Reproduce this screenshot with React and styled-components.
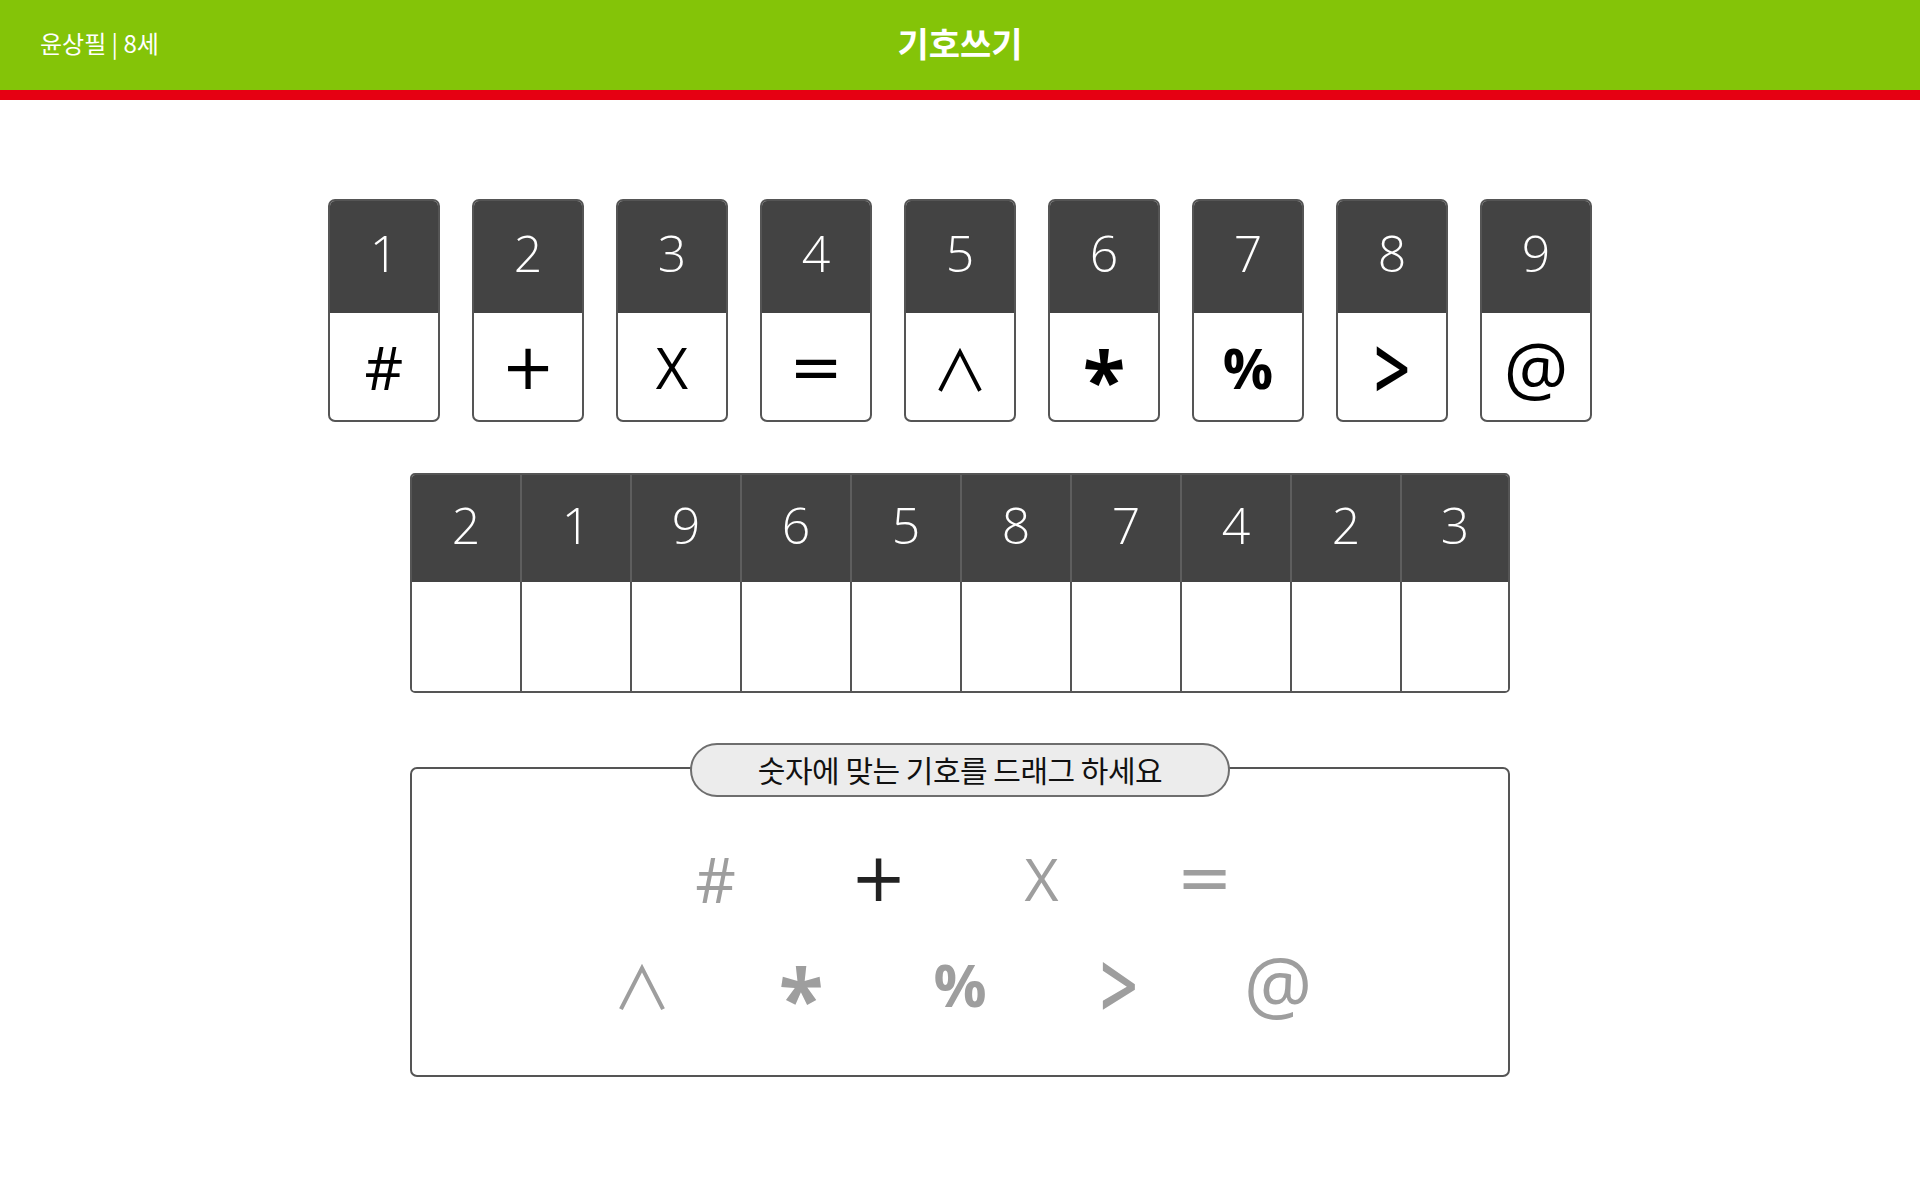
import React from "react";
import styled, { createGlobalStyle } from "styled-components";

const GlobalStyle = createGlobalStyle`
  html, body {
    margin: 0;
    padding: 0;
    background: #ffffff;
  }
  body {
    font-family: "Noto Sans CJK KR", "Open Sans", sans-serif;
  }
`;

const OPEN = '"Open Sans", sans-serif';
const DEJAVU = '"DejaVu Sans", sans-serif';
const CJK = '"Noto Sans CJK KR", sans-serif';

// each symbol's glyph settings, so they read the same size in the cards
const KEY = [
  { num: 1, sym: "#", font: OPEN, size: 60 },
  { num: 2, sym: "+", font: DEJAVU, size: 64 },
  { num: 3, sym: "X", font: OPEN, size: 56 },
  { num: 4, sym: "=", font: DEJAVU, size: 64 },
  { num: 5, sym: "∧", font: CJK, size: 56 },
  { num: 6, sym: "*", font: OPEN, size: 78, weight: 700, drop: 12 },
  { num: 7, sym: "%", font: OPEN, size: 56, weight: 700 },
  { num: 8, sym: ">", font: OPEN, size: 64, weight: 600, sy: 1.4 },
  { num: 9, sym: "@", font: OPEN, size: 72 },
];

const QUESTION = [2, 1, 9, 6, 5, 8, 7, 4, 2, 3];

const ROW_ONE = KEY.slice(0, 4);
const ROW_TWO = KEY.slice(4);

// header
const Header = styled.header`
  box-sizing: border-box;
  height: 100px;
  padding: 0 40px 6px;
  background: #84c408;
  border-bottom: 10px solid #e60012;
  display: grid;
  grid-template-columns: 1fr auto 1fr;
  align-items: center;
`;

const Student = styled.div`
  color: #ffffff;
  font-size: 24px;
  white-space: pre;
`;

const Title = styled.h1`
  margin: 0;
  color: #ffffff;
  font-size: 34px;
  font-weight: 700;
`;

// number -> symbol key
const KeyRow = styled.div`
  display: flex;
  justify-content: center;
  gap: 32px;
  margin-top: 99px;
`;

const Card = styled.div`
  width: 112px;
  height: 223px;
  box-sizing: border-box;
  border: 2px solid #555555;
  border-radius: 7px;
  background: #ffffff;
  display: flex;
  flex-direction: column;
`;

const Digit = styled.div`
  background: #434343;
  color: #ffffff;
  display: flex;
  align-items: center;
  justify-content: center;
  box-sizing: border-box;
  padding-bottom: 8px;
  font-family: "Open Sans", sans-serif;
  font-weight: 300;
  font-size: 50px;
`;

const CardNum = styled(Digit)`
  flex: 0 0 112px;
  border-radius: 5px 5px 0 0;
`;

const Glyph = styled.span`
  display: inline-block;
  font-family: ${(p) => p.$font};
  font-weight: ${(p) => p.$weight || 400};
  font-size: ${(p) => p.$size}px;
  line-height: 1;
  padding-top: ${(p) => p.$drop * 2}px;
  color: ${(p) => p.$color};
  transform: scaleY(${(p) => p.$sy || 1});
`;

const CardSym = styled.div`
  flex: 1;
  min-height: 0;
  display: flex;
  align-items: center;
  justify-content: center;
`;

// question table
const Table = styled.div`
  width: 1100px;
  box-sizing: border-box;
  margin: 51px auto 0;
  display: grid;
  grid-template-columns: 108px repeat(8, 110px) 1fr;
  grid-template-rows: 107px 109px;
  border: 2px solid #555555;
  border-radius: 5px;
  overflow: hidden;
`;

const QCell = styled(Digit)`
  border-left: ${(p) => (p.$first ? "none" : "2px solid #5e5e5e")};
`;

const Answer = styled.div`
  background: #ffffff;
  border-left: ${(p) => (p.$first ? "none" : "2px solid #555555")};
`;

// drag source
const Tray = styled.div`
  position: relative;
  width: 1100px;
  box-sizing: border-box;
  margin: 74px auto 0;
  padding: 56px 0 38px;
  border: 2px solid #555555;
  border-radius: 7px;
`;

const Hint = styled.div`
  position: absolute;
  top: -26px;
  left: 50%;
  transform: translateX(-50%);
  width: 540px;
  height: 54px;
  box-sizing: border-box;
  padding-bottom: 3px;
  border: 2px solid #6e6e6e;
  border-radius: 27px;
  background: #ececec;
  display: flex;
  align-items: center;
  justify-content: center;
  font-size: 30px;
  letter-spacing: -0.5px;
  color: #111111;
  white-space: nowrap;
`;

const SymRow = styled.div`
  display: flex;
  justify-content: center;
  height: 106px;
`;

const SymItem = styled.div`
  width: ${(p) => p.$w}px;
  display: flex;
  align-items: center;
  justify-content: center;
  cursor: grab;
`;

export default function App() {
  const renderSym = (k, scale, color) => (
    <Glyph
      $font={k.font}
      $weight={k.weight}
      $sy={k.sy}
      $drop={k.drop ? Math.round(k.drop * scale) : 0}
      $size={Math.round(k.size * scale)}
      $color={color}
    >
      {k.sym}
    </Glyph>
  );

  return (
    <>
      <GlobalStyle />
      <Header>
        <Student>윤상필 | 8세</Student>
        <Title>기호쓰기</Title>
        <div />
      </Header>

      <KeyRow>
        {KEY.map((k) => (
          <Card key={k.num}>
            <CardNum>{k.num}</CardNum>
            <CardSym>{renderSym(k, 1, "#000000")}</CardSym>
          </Card>
        ))}
      </KeyRow>

      <Table>
        {QUESTION.map((n, i) => (
          <QCell key={"q" + i} $first={i === 0}>
            {n}
          </QCell>
        ))}
        {QUESTION.map((n, i) => (
          <Answer key={"a" + i} $first={i === 0} />
        ))}
      </Table>

      <Tray>
        <Hint>숫자에 맞는 기호를 드래그 하세요</Hint>
        <SymRow>
          {ROW_ONE.map((k) => (
            <SymItem key={k.num} $w={163}>
              {renderSym(k, 1.05, k.sym === "+" ? "#222222" : "#9e9e9e")}
            </SymItem>
          ))}
        </SymRow>
        <SymRow>
          {ROW_TWO.map((k) => (
            <SymItem key={k.num} $w={159}>
              {renderSym(k, 1.05, "#9e9e9e")}
            </SymItem>
          ))}
        </SymRow>
      </Tray>
    </>
  );
}
